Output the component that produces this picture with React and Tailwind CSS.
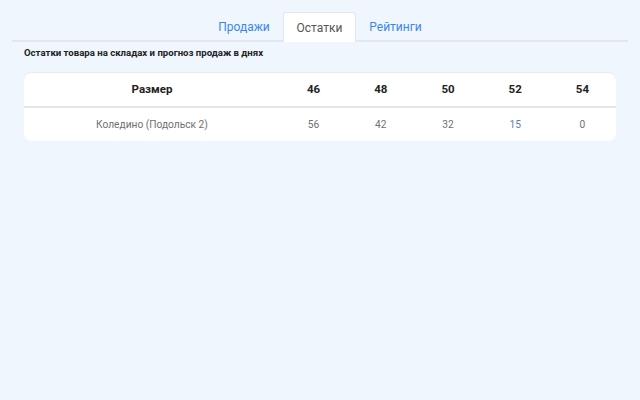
export default function App() {
  const sizes = ['46', '48', '50', '52', '54'];
  const row = { name: 'Коледино (Подольск 2)', values: ['56', '42', '32', '15', '0'] };

  return (
    <div className="min-h-screen w-full bg-[#f0f6fe] pt-[12px] font-['Roboto',sans-serif]">
      <div className="mx-[12px]">
        <div className="flex justify-center border-b-2 border-[#e3e8ef]">
          <button className="mx-[1px] mb-[-2px] h-[29px] w-[74px] text-[12px] text-[#3a86f0]">Продажи</button>
          <button className="mx-[1px] mb-[-2px] h-[30px] w-[73px] rounded-t-[3px] border border-b-0 border-[#e3e8ef] bg-white text-[12px] text-[#555]">Остатки</button>
          <button className="mx-[1px] mb-[-2px] h-[29px] w-[75px] text-[12px] text-[#3a86f0]">Рейтинги</button>
        </div>
        <div className="px-[12px]">
          <div className="mt-[5px] text-[9.6px] font-bold leading-[12px] text-[#222]">
            Остатки товара на складах и прогноз продаж в днях
          </div>
          <div className="mt-[13px] overflow-hidden rounded-[8px] border-t border-[#e6e9ee] bg-white">
            <div className="grid h-[35px] grid-cols-[256px_repeat(5,1fr)] items-center border-b-2 border-[#e3e6ea] text-[11.5px] font-bold text-[#222]">
              <div className="text-center">Размер</div>
              {sizes.map((s) => (
                <div key={s} className="text-center">{s}</div>
              ))}
            </div>
            <div className="grid h-[33px] grid-cols-[256px_repeat(5,1fr)] items-center text-[10.2px] text-[#707070]">
              <div className="text-center">{row.name}</div>
              {row.values.map((v, i) => (
                <div key={i} className={i === 3 ? 'text-center text-[#5b7fa8]' : 'text-center'}>{v}</div>
              ))}
            </div>
          </div>
        </div>
      </div>
    </div>
  );
}
